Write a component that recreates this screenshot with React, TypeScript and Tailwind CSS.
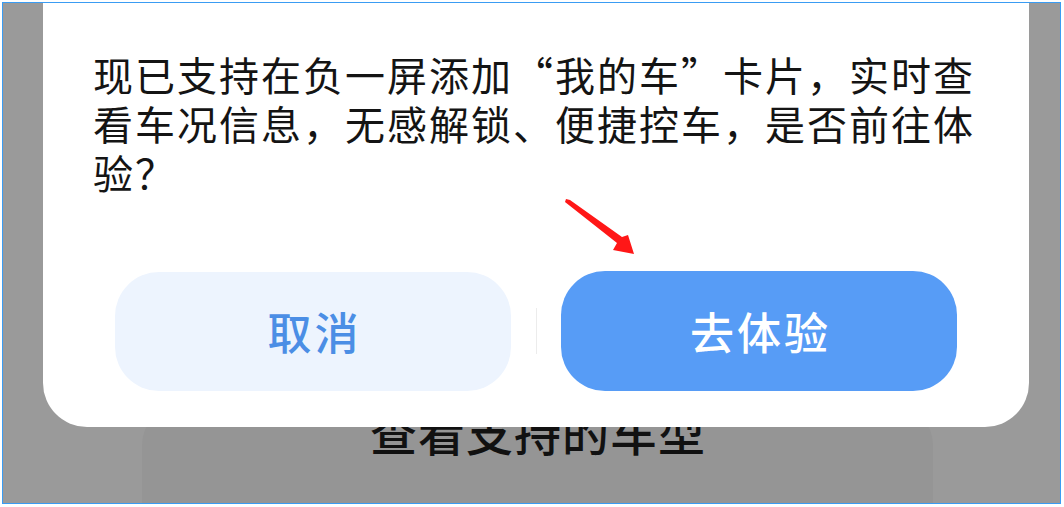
import React from "react";

function Arrow() {
  return (
    <svg
      className="absolute left-[557px] top-[192px] z-20"
      width="80"
      height="65"
      viewBox="0 0 80 65"
    >
      <polygon
        points="6,4 10,5 62,42 68,40 74,59 53,55 57,48 5,7"
        fill="#ff1717"
      />
    </svg>
  );
}

export default function App() {
  return (
    <div className="w-[1064px] h-[507px] bg-white pl-[2px] pt-[2px] overflow-hidden font-['Noto_Sans_CJK_SC',sans-serif]">
      <div className="relative w-[1059px] h-[502px] border border-[#3a9cf3] bg-[#9a9a9a] overflow-hidden">
        {/* underlying page */}
        <div className="flex flex-col h-full pt-[402px]">
          <div className="w-[791px] ml-[139px] flex-1 rounded-t-[40px] bg-[#959595] flex flex-col items-center">
            <div className="mt-[2px] text-[47px] leading-[47px] font-medium text-[#111] tracking-[1px] pl-[1px]">
              查看支持的车型
            </div>
          </div>
        </div>

        {/* dialog */}
        <div className="absolute left-[40px] top-0 z-10 w-[986px] h-[424px] bg-white rounded-b-[44px] flex flex-col pt-[47px] pb-[36px]">
          <p className="px-[50px] text-[40px] leading-[49px] tracking-[2px] text-[#141414]">
            现已支持在负一屏添加“我的车”卡片，实时查看车况信息，无感解锁、便捷控车，是否前往体验？
          </p>
          <div className="mt-auto px-[72px] flex items-center justify-between">
            <div className="w-[396px] h-[119px] rounded-[44px] bg-[#edf4fe] flex items-center justify-center text-[44px] tracking-[3px] pl-[3px] font-medium text-[#4b8ee5]">
              取消
            </div>
            <div className="w-px h-[46px] bg-[#ececec]" />
            <div className="w-[396px] h-[120px] rounded-[44px] bg-[#579cf6] flex items-center justify-center text-[44px] tracking-[3px] pl-[3px] font-medium text-white">
              去体验
            </div>
          </div>
        </div>

        <Arrow />
      </div>
    </div>
  );
}
